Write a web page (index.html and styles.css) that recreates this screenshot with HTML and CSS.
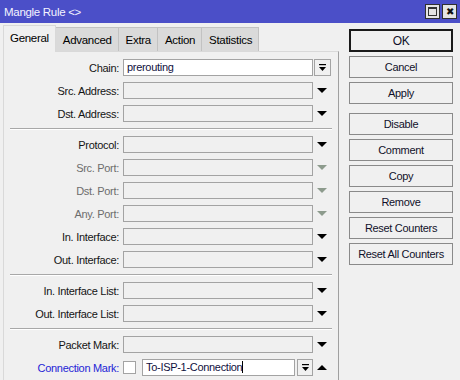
FILE: index.html
```html
<!DOCTYPE html>
<html lang="en">
<head>
  <meta charset="UTF-8" />
  <title>Mangle Rule</title>
  <link rel="stylesheet" href="styles.css">
</head>
<body>

<div class="window">
  <div class="titlebar">
    <span class="title">Mangle Rule &lt;&gt;</span>
    <div class="win-buttons">
      <span class="win-btn"><span class="max-box"></span></span>
      <span class="win-btn close">&#x2716;</span>
    </div>
  </div>

  <div class="main">
    <div class="left">
      <div class="tabs">
        <div class="tab active">General</div>
        <div class="tab">Advanced</div>
        <div class="tab">Extra</div>
        <div class="tab">Action</div>
        <div class="tab">Statistics</div>
      </div>

      <div class="panel">
        <div class="row">
          <label>Chain:</label>
          <div class="field white">prerouting</div>
          <span class="drop-btn">
            <svg width="9" height="9" viewBox="0 0 9 9"><rect x="1" y="1" width="7" height="1.2" fill="#000"/><path d="M1 4 H8 L4.5 8 Z" fill="#000"/></svg>
          </span>
        </div>
        <div class="row">
          <label>Src. Address:</label>
          <div class="field"></div>
          <span class="arrow"></span>
        </div>
        <div class="row">
          <label>Dst. Address:</label>
          <div class="field"></div>
          <span class="arrow"></span>
        </div>

        <div class="sep"></div>

        <div class="row">
          <label>Protocol:</label>
          <div class="field"></div>
          <span class="arrow"></span>
        </div>
        <div class="row">
          <label class="disabled">Src. Port:</label>
          <div class="field"></div>
          <span class="arrow off"></span>
        </div>
        <div class="row">
          <label class="disabled">Dst. Port:</label>
          <div class="field"></div>
          <span class="arrow off"></span>
        </div>
        <div class="row">
          <label class="disabled">Any. Port:</label>
          <div class="field"></div>
          <span class="arrow off"></span>
        </div>
        <div class="row">
          <label>In. Interface:</label>
          <div class="field"></div>
          <span class="arrow"></span>
        </div>
        <div class="row">
          <label>Out. Interface:</label>
          <div class="field"></div>
          <span class="arrow"></span>
        </div>

        <div class="sep"></div>

        <div class="row">
          <label>In. Interface List:</label>
          <div class="field"></div>
          <span class="arrow"></span>
        </div>
        <div class="row">
          <label>Out. Interface List:</label>
          <div class="field"></div>
          <span class="arrow"></span>
        </div>

        <div class="sep"></div>

        <div class="row">
          <label>Packet Mark:</label>
          <div class="field"></div>
          <span class="arrow"></span>
        </div>
        <div class="row">
          <label class="link">Connection Mark:</label>
          <div class="mark-field">
            <span class="check"></span>
            <div class="field white">To-ISP-1-Connection<span class="caret"></span></div>
            <span class="drop-btn small">
              <svg width="9" height="9" viewBox="0 0 9 9"><rect x="1" y="1" width="7" height="1.2" fill="#000"/><path d="M1 4 H8 L4.5 8 Z" fill="#000"/></svg>
            </span>
          </div>
          <span class="arrow up"></span>
        </div>
      </div>
    </div>

    <div class="buttons">
      <div class="btn default">OK</div>
      <div class="btn">Cancel</div>
      <div class="btn">Apply</div>
      <div class="btn spaced">Disable</div>
      <div class="btn">Comment</div>
      <div class="btn">Copy</div>
      <div class="btn">Remove</div>
      <div class="btn">Reset Counters</div>
      <div class="btn">Reset All Counters</div>
    </div>
  </div>
</div>

</body>
</html>
```

FILE: styles.css
```css
body {
  margin: 0;
  font-family: "Liberation Sans", Arial, sans-serif;
  font-size: 11px;
  letter-spacing: -0.3px;
  color: #000;
  background: #f0f0f0;
}

.window {
  width: 460px;
  height: 380px;
  overflow: hidden;
  background: #f0f0f0;
}

.titlebar {
  height: 23px;
  background: #4b4fc8;
  display: flex;
  align-items: center;
  justify-content: space-between;
  padding: 0 3px 0 4px;
}

.title {
  color: #f4f4ff;
  font-size: 11.5px;
  margin-top: 1px;
}

.win-buttons {
  display: flex;
  gap: 2px;
}

.win-btn {
  width: 13px;
  height: 13px;
  background: #e4e4e4;
  border: 1px solid #303030;
  display: flex;
  align-items: center;
  justify-content: center;
  font-size: 10px;
  line-height: 1;
  color: #111;
}

.max-box {
  width: 7px;
  height: 6px;
  border: 1px solid #333;
  border-top-width: 2px;
}

.main {
  display: flex;
}

.left {
  margin-left: 3px;
  width: 336px;
}

.tabs {
  display: flex;
  padding-top: 1px;
  height: 27px;
  align-items: flex-end;
}

.tab {
  height: 23px;
  padding: 0 6px 0 7px;
  display: flex;
  align-items: center;
  background: #dadada;
  border: 1px solid #c2c2c2;
  border-bottom: none;
  margin-left: -1px;
  font-size: 11.5px;
}

.tab.active {
  margin-left: 0;
  background: #f0f0f0;
  border-color: #d9d9d9;
  padding: 0 6px 3px 6px;
  position: relative;
  z-index: 1;
  margin-bottom: -1px;
  box-sizing: border-box;
  height: 27px;
}

.panel {
  border: 1px solid #d9d9d9;
  border-right-color: #a0a0a0;
  border-bottom: none;
  padding: 7px 0 0 0;
  height: 330px;
  box-sizing: border-box;
  display: flex;
  flex-direction: column;
  gap: 6px;
}

.row {
  display: flex;
  align-items: center;
  height: 17px;
}

.row label {
  width: 115px;
  text-align: right;
  margin-right: 4px;
  white-space: nowrap;
  color: #141414;
}

.row label.disabled {
  color: #6d6d6d;
}

.row label.link {
  color: #2424d6;
}

.field {
  width: 190px;
  height: 17px;
  box-sizing: border-box;
  border: 1px solid #a3a3a3;
  background: #f0f0f0;
  padding: 1px 3px;
  white-space: nowrap;
  overflow: hidden;
  color: #101040;
}

.field.white {
  background: #fff;
  line-height: 13px;
}

.drop-btn {
  width: 17px;
  height: 17px;
  box-sizing: border-box;
  border: 1px solid #a3a3a3;
  background: #f0f0f0;
  display: flex;
  align-items: center;
  justify-content: center;
  margin-left: 1px;
}

.drop-btn.small {
  width: 16px;
  margin-left: 2px;
}

.arrow {
  width: 18px;
  display: flex;
  justify-content: center;
}

.arrow::before {
  content: "";
  border-left: 5px solid transparent;
  border-right: 5px solid transparent;
  border-top: 5px solid #000;
}

.arrow.off::before {
  border-top-color: #8d9b8d;
}

.arrow.up::before {
  border-top: none;
  border-bottom: 5px solid #000;
}

.mark-field {
  width: 190px;
  display: flex;
  align-items: center;
}

.check {
  width: 13px;
  height: 13px;
  box-sizing: border-box;
  border: 1px solid #a3a3a3;
  background: #fff;
  margin-right: 6px;
}

.mark-field .field {
  width: 153px;
}

.caret {
  display: inline-block;
  width: 1px;
  height: 12px;
  background: #000;
  vertical-align: -2px;
}

.sep {
  height: 0;
  margin: 0 6px 0 6px;
  border-top: 1px solid #a8a8a8;
  border-bottom: 1px solid #fff;
}

.buttons {
  margin-left: 10px;
  padding-top: 6px;
  display: flex;
  flex-direction: column;
  gap: 4px;
  width: 104px;
}

.btn {
  height: 22px;
  box-sizing: border-box;
  border: 1px solid #8a8a8a;
  background: #f0f0f0;
  display: flex;
  align-items: center;
  justify-content: center;
  white-space: nowrap;
  color: #10102a;
}

.btn.default {
  border: 2px solid #1a1a1a;
  height: 23px;
  font-size: 12px;
}

.btn.spaced {
  margin-top: 5px;
}
```
